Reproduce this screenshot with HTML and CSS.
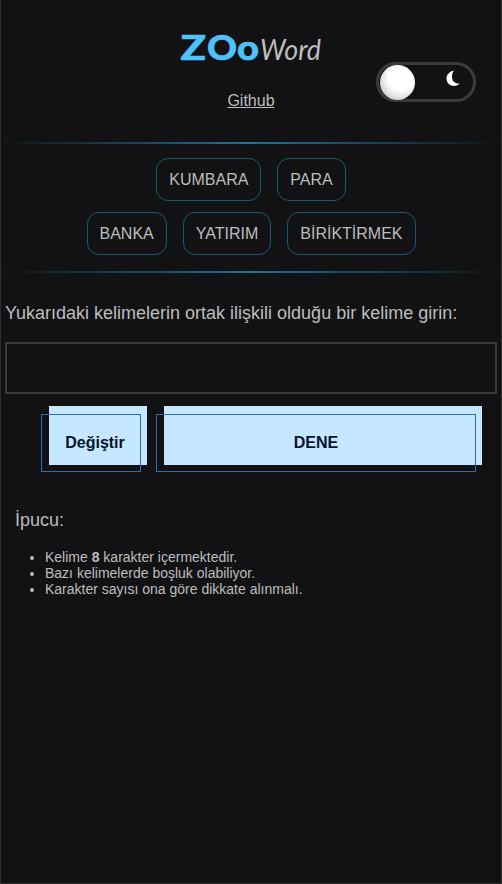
FILE: index.html
```html
<!DOCTYPE html>
<html lang="tr">
<head>
<meta charset="utf-8">
<title>ZOoWord</title>
<link rel="stylesheet" href="styles.css">
</head>
<body>
<header class="header">
  <svg class="logo" viewBox="0 0 150 56" role="img" aria-label="ZOoWord">
    <text class="logo-zoo" y="40"><tspan x="4.500" textLength="25.500" lengthAdjust="spacingAndGlyphs">Z</tspan><tspan x="31" textLength="30" lengthAdjust="spacingAndGlyphs">O</tspan><tspan x="61" textLength="22" lengthAdjust="spacingAndGlyphs">o</tspan></text>
    <text class="logo-word" x="84" y="40" textLength="61" lengthAdjust="spacingAndGlyphs">Word</text>
  </svg>
  <a class="github">Github</a>
  <div class="toggle">
    <span class="knob"></span>
    <svg class="moon" viewBox="0 0 14 17"><path d="M8 0.5C3.5 1.5 0.5 4.5 0.5 8.5C0.5 13 4 16 8 16C10.500 16 12.500 15 13.500 13.500C9 14 6 11 6 7C6 4.500 6.500 2.500 8 0.500Z"/></svg>
  </div>
</header>
<main>
  <div class="rule"></div>
  <section class="words">
    <div class="row"><span class="word">KUMBARA</span><span class="word">PARA</span></div>
    <div class="row"><span class="word">BANKA</span><span class="word">YATIRIM</span><span class="word">BİRİKTİRMEK</span></div>
  </section>
  <div class="rule"></div>
  <label class="prompt" for="guess">Yukarıdaki kelimelerin ortak ilişkili olduğu bir kelime girin:</label>
  <input class="guess" id="guess" type="text">
  <div class="actions">
    <button class="btn change">Değiştir</button>
    <button class="btn try">DENE</button>
  </div>
  <section class="tips">
    <h2>İpucu:</h2>
    <ul>
      <li>Kelime <b>8</b> karakter içermektedir.</li>
      <li>Bazı kelimelerde boşluk olabiliyor.</li>
      <li>Karakter sayısı ona göre dikkate alınmalı.</li>
    </ul>
  </section>
</main>
</body>
</html>
```
FILE: styles.css
```css
* { box-sizing: border-box; }
body {
  margin: 0;
  height: 884px;
  overflow: hidden;
  background: #121214;
  border: 1px solid #2d2e30;
  border-top: 0;
  color: #bdbdbd;
  font-family: "Liberation Sans", Arial, sans-serif;
  font-size: 16px;
}
.header {
  position: relative;
  height: 142px;
  padding-top: 20px;
  display: flex;
  flex-direction: column;
  align-items: center;
}
.logo { width: 150px; height: 56px; display: block; overflow: visible; }
.logo-zoo { font: 900 35px Lato, sans-serif; fill: #4fc3f7; stroke: #4fc3f7; stroke-width: 0.6px; }
.logo-word { font: italic 400 29px Lato, sans-serif; fill: #bdbdbd; }
.github { margin-top: 16px; line-height: 18px; text-decoration: underline; }
.toggle {
  position: absolute;
  top: 62px;
  right: 25px;
  width: 100px;
  height: 40px;
  border: 3px solid #3b3b3d;
  border-radius: 20px;
}
.knob {
  position: absolute;
  left: 1px;
  top: 0;
  width: 35px;
  height: 35px;
  border-radius: 50%;
  background: radial-gradient(circle 28px at 60% 38%, #fff 45%, #b8b8b8 100%);
}
.moon { position: absolute; left: 67px; top: 5px; width: 14px; height: 17px; fill: #fff; }
.rule { height: 2px; background: linear-gradient(90deg, transparent, #1b7599, transparent); }
.words { height: 127px; padding-top: 14px; display: flex; flex-direction: column; gap: 11px; }
.row { display: flex; justify-content: center; gap: 16px; }
.word {
  height: 43px;
  padding: 0 12px;
  line-height: 42px;
  border: 1px solid #185a70;
  border-radius: 12px;
}
.prompt { display: block; margin: 30px 4px 0; font-size: 18px; line-height: 21px; white-space: nowrap; }
.guess {
  display: block;
  width: 492px;
  height: 52px;
  margin: 18px 4px 0;
  padding: 0 12px;
  border: 2px solid #3a3a3b;
  background: transparent;
  color: inherit;
  font: inherit;
  outline: none;
}
.actions { display: flex; gap: 17px; margin: 12px 19px 0 48px; }
.btn {
  position: relative;
  height: 59px;
  padding: 14px 0 0;
  border: 0;
  background: #c5e7ff;
  color: #06142e;
  font: bold 16px/19px "Liberation Sans", Arial, sans-serif;
}
.btn::after {
  content: "";
  position: absolute;
  top: 8px;
  left: -8px;
  right: 6px;
  bottom: -7px;
  border: 1px solid #2e6caa;
}
.change { width: 98px; padding-right: 6px; }
.try { flex: 1; padding-right: 14px; }
.tips { margin: 45px 14px 0; }
.tips h2 { margin: 0; font-size: 18px; font-weight: normal; line-height: 21px; }
.tips ul { margin: 18px 0 0; padding-left: 30px; font-size: 14px; line-height: 16px; }
```
